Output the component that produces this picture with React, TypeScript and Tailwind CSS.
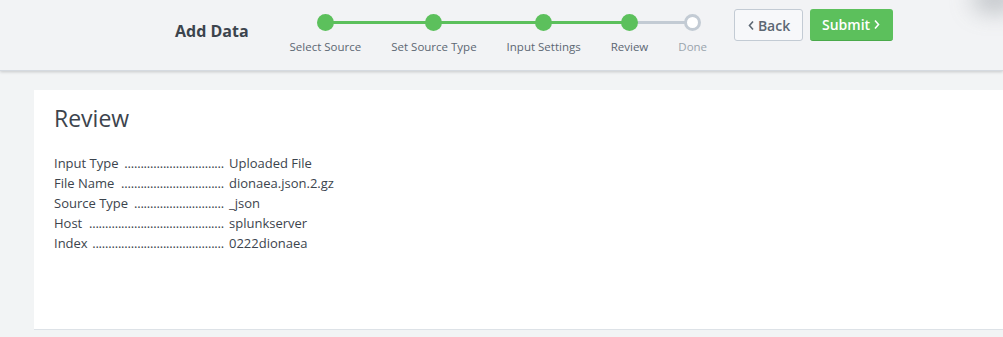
import React from "react";

const steps = [
  { label: "Select Source", done: true },
  { label: "Set Source Type", done: true },
  { label: "Input Settings", done: true },
  { label: "Review", done: true },
  { label: "Done", done: false },
];

const rows: [string, string, number][] = [
  ["Input Type", "Uploaded File", 31],
  ["File Name", "dionaea.json.2.gz", 32],
  ["Source Type", "_json", 28],
  ["Host", "splunkserver", 42],
  ["Index", "0222dionaea", 41],
];

export default function App() {
  return (
    <div
      className="relative w-[1003px] h-[337px] overflow-hidden bg-[#f2f4f5] text-[#3c444d]"
      style={{ fontFamily: "'Open Sans', Lato, sans-serif" }}
    >
      <div className="absolute -top-[12px] -right-[14px] w-[44px] h-[22px] rounded-full bg-[#9aa0a6] blur-md opacity-70" />
      <header className="h-[71px] flex items-start pl-[175px] bg-[#f2f3f5] shadow-[0_1px_3px_rgba(0,0,0,0.18)] border-b border-[#d5dae0]">
        <div className="mt-[19px] text-[16px] leading-[24px] font-bold text-[#3c444d]">Add Data</div>
        <div className="flex ml-[26px] pt-[14px]">
          {steps.map((s, i) => {
            const prev = i > 0 ? steps[i].done : false;
            const next = i < steps.length - 1 ? steps[i + 1].done : false;
            return (
              <div key={s.label} className="relative flex flex-col items-center px-[15px]">
                {i > 0 && (
                  <div
                    className={`absolute top-[7px] left-0 w-1/2 h-[3px] ${prev ? "bg-[#5cc05c]" : "bg-[#c3cbd4]"}`}
                  />
                )}
                {i < steps.length - 1 && (
                  <div
                    className={`absolute top-[7px] right-0 w-1/2 h-[3px] ${next ? "bg-[#5cc05c]" : "bg-[#c3cbd4]"}`}
                  />
                )}
                <div
                  className={`relative w-[17px] h-[17px] rounded-full ${
                    s.done ? "bg-[#5cc05c]" : "bg-white border-[3px] border-[#c3cbd4]"
                  }`}
                />
                <div
                  className={`mt-[8px] text-[11.5px] leading-[16px] whitespace-nowrap ${
                    s.done ? "text-[#5c6773]" : "text-[#9aa4ad]"
                  }`}
                >
                  {s.label}
                </div>
              </div>
            );
          })}
        </div>
        <div className="flex gap-[7px] mt-[9px] ml-[12px]">
          <button className="h-[32px] w-[69px] flex items-center justify-center gap-[3px] rounded-[3px] border border-[#c3cbd4] bg-[#f7f8fa] text-[14px] font-semibold text-[#5c6773]">
            <svg width="8" height="11" viewBox="0 0 8 11" fill="none">
              <path d="M6 1.5L2.5 5.5L6 9.5" stroke="#5c6773" strokeWidth="1.6" />
            </svg>
            Back
          </button>
          <button className="h-[32px] w-[83px] flex items-center justify-center gap-[3px] rounded-[3px] bg-[#5cc05c] border-b border-[#4aa94a] text-[14px] font-semibold text-white">
            Submit
            <svg width="8" height="11" viewBox="0 0 8 11" fill="none">
              <path d="M2 1.5L5.5 5.5L2 9.5" stroke="#ffffff" strokeWidth="1.6" />
            </svg>
          </button>
        </div>
      </header>
      <main className="pl-[34px] pt-[19px]">
        <div className="h-[240px] bg-white border-b border-[#dde2e7] pl-[20px] pt-[13px]">
          <h1 className="text-[23px] leading-[30px] font-normal text-[#3c444d]">Review</h1>
          <div className="mt-[20px] text-[13px] leading-[20px] text-[#3c444d]">
            {rows.map(([k, v, n]) => (
              <div key={k} className="flex">
                <div className="w-[170px] flex justify-between whitespace-nowrap">
                  <span>{k}</span>
                  <span className="tracking-[-0.2px]">{".".repeat(n)}</span>
                </div>
                <div className="ml-[5px]">{v}</div>
              </div>
            ))}
          </div>
        </div>
      </main>
    </div>
  );
}
